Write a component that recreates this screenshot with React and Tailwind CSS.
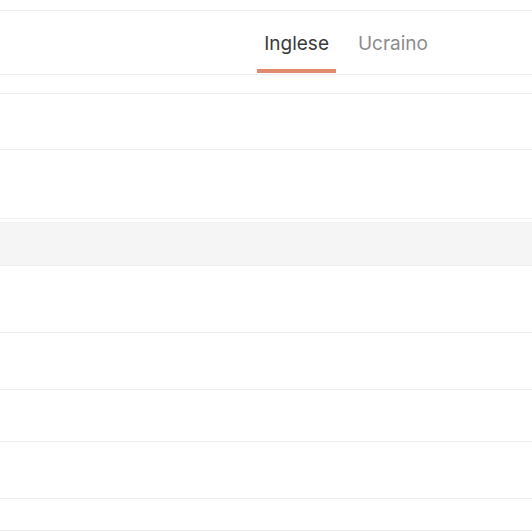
import React, { useState } from "react";

const Line = () => <div className="h-px bg-[#eeeeee]" />;

const App = () => {
  const [tab, setTab] = useState("en");

  const tabs = [
    { id: "en", label: "Inglese" },
    { id: "uk", label: "Ucraino" },
  ];

  return (
    <div
      className="h-[532px] w-full overflow-hidden bg-white"
      style={{ fontFamily: "Inter, 'Liberation Sans', sans-serif" }}
    >
      <div className="h-[10px]" />
      <Line />

      {/* Header with language tabs */}
      <div className="flex h-[63px] items-end justify-end gap-[15px] pr-[97px]">
        {tabs.map((t) => (
          <button
            key={t.id}
            onClick={() => setTab(t.id)}
            className="flex flex-col items-stretch"
          >
            <span
              className={`px-[7px] text-[19px] leading-[24px] ${
                tab === t.id ? "text-[#3a3a3a]" : "text-[#8c8c8c]"
              }`}
            >
              {t.label}
            </span>
            <span
              className={`mt-[13px] mb-[1px] h-[4px] ${
                tab === t.id ? "bg-[#e08a6e]" : "bg-transparent"
              }`}
            />
          </button>
        ))}
      </div>
      <Line />

      <div className="h-[18px]" />
      <Line />
      <div className="h-[55px]" />
      <Line />
      <div className="h-[68px]" />
      <Line />
      <div className="h-[3px]" />
      <div className="h-px bg-[#f0f0f0]" />
      <div className="h-[42px] bg-[#f5f5f5]" />
      <Line />
      <div className="h-[66px]" />
      <Line />
      <div className="h-[56px]" />
      <Line />
      <div className="h-[51px]" />
      <Line />
      <div className="h-[56px]" />
      <Line />
      <div className="h-[31px]" />
      <Line />
    </div>
  );
};

export default App;
